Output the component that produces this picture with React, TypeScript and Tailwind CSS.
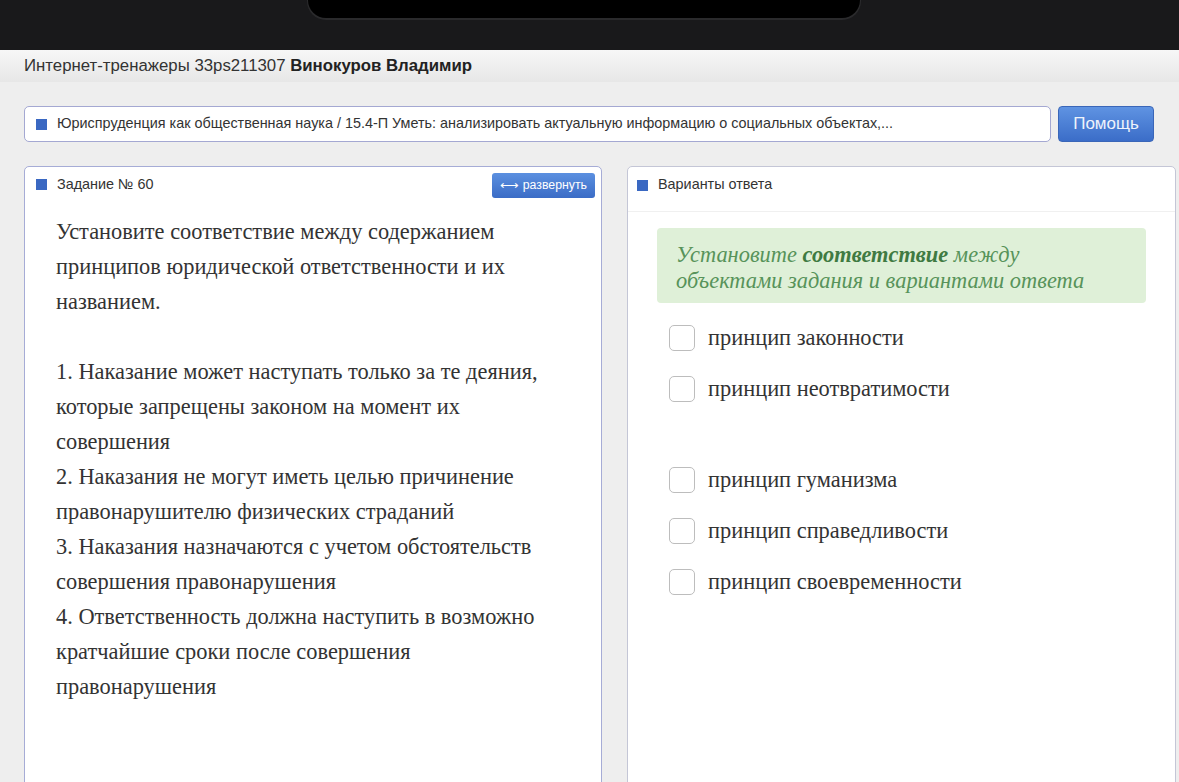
const LEFT_LINES = [
  'Установите соответствие между содержанием',
  'принципов юридической ответственности и их',
  'названием.',
  '',
  '1. Наказание может наступать только за те деяния,',
  'которые запрещены законом на момент их',
  'совершения',
  '2. Наказания не могут иметь целью причинение',
  'правонарушителю физических страданий',
  '3. Наказания назначаются с учетом обстоятельств',
  'совершения правонарушения',
  '4. Ответственность должна наступить в возможно',
  'кратчайшие сроки после совершения',
  'правонарушения',
]

const OPTIONS = [
  'принцип законности',
  'принцип неотвратимости',
  null,
  'принцип гуманизма',
  'принцип справедливости',
  'принцип своевременности',
]

const sans = "font-['Liberation_Sans',Arial,sans-serif]"
const serif = "font-['Liberation_Serif','Times_New_Roman',serif]"

function Marker() {
  return <span className="w-[11px] h-[11px] bg-[#3a68c2] shrink-0" />
}

export default function App() {
  return (
    <div className={`w-[1179px] h-[782px] overflow-hidden bg-[#eeeeee] flex flex-col ${sans}`}>
      {/* device top bar */}
      <div className="h-[50px] bg-[#19191b] shrink-0">
        <div className="ml-[308px] w-[552px] h-[18px] bg-black rounded-b-[38px] shadow-[0_1px_0_1px_#2a2a2c]" />
      </div>

      {/* header */}
      <div className="h-[32px] shrink-0 bg-gradient-to-b from-[#f7f7f7] to-[#e7e7e7] flex items-center px-6 text-[16.8px] text-[#333]">
        Интернет-тренажеры 33ps211307&nbsp;<b className="font-bold text-[#222]">Винокуров Владимир</b>
      </div>

      {/* topic row */}
      <div className="flex gap-[7px] pl-6 pr-[25px] mt-[24px] h-[36px] shrink-0">
        <div className="flex-1 flex items-center gap-[10px] pl-[11px] bg-white border border-[#a4a8d2] rounded-[5px] text-[14.4px] text-[#333] whitespace-nowrap overflow-hidden">
          <Marker />
          Юриспруденция как общественная наука / 15.4-П Уметь: анализировать актуальную информацию о социальных объектах,...
        </div>
        <button className="w-[96px] rounded-[4px] bg-gradient-to-b from-[#5f93e2] to-[#3b6dc8] text-[#eef3fb] text-[17px] border border-[#3a66b8]">
          Помощь
        </button>
      </div>

      {/* panels */}
      <div className="flex gap-[25px] pl-6 pr-[3px] mt-[24px] flex-1 min-h-0">
        <div className="w-[578px] h-[640px] bg-white border border-[#a6acd6] rounded-t-[5px] shrink-0">
          <div className="flex items-center justify-between pl-[11px] pr-[6px] pt-[5px] h-[31px]">
            <div className="flex items-center gap-[10px] text-[14.4px] text-[#333]">
              <Marker />
              Задание № 60
            </div>
            <button className="h-[25px] px-[8px] rounded-[3px] bg-gradient-to-b from-[#5b90e0] to-[#3b6cc6] text-white text-[12.3px] flex items-center gap-[4px]">
              <span className="text-[13px] leading-none">⟷</span>развернуть
            </button>
          </div>
          <div className={`${serif} text-[22.4px] leading-[35px] text-[#333] pl-[31px] pt-[16px]`}>
            {LEFT_LINES.map((l, i) => (
              <div key={i} className="h-[35px] whitespace-nowrap">{l}</div>
            ))}
          </div>
        </div>

        <div className="flex-1 h-[640px] bg-white border border-[#c4c6d6] rounded-t-[5px]">
          <div className="flex items-start pl-[9px] pt-[5px] h-[45px] border-b border-[#f0f0f0] text-[14.4px] text-[#333]">
            <div className="flex items-center gap-[10px] h-[26px]">
              <Marker />
              Варианты ответа
            </div>
          </div>
          <div className="px-[29px] pt-[16px]">
            <div className={`${serif} italic text-[22.4px] leading-[26px] text-[#57935a] bg-[#dff0d8] rounded-[4px] pl-[19px] pt-[14px] pb-[8px] h-[75px] whitespace-nowrap`}>
              Установите <b className="font-bold text-[#3f7a42]">соответствие</b> между
              <br />
              объектами задания и вариантами ответа
            </div>
            <div className={`${serif} text-[22.4px] text-[#333] mt-[9px] pl-[12px]`}>
              {OPTIONS.map((o, i) =>
                o === null ? (
                  <div key={i} className="h-[40px]" />
                ) : (
                  <div key={i} className="h-[51px] flex items-center gap-[13px]">
                    <span className="w-[26px] h-[26px] rounded-[5px] border border-[#bdbdbd] bg-white shrink-0" />
                    <span>{o}</span>
                  </div>
                ),
              )}
            </div>
          </div>
        </div>
      </div>
    </div>
  )
}
